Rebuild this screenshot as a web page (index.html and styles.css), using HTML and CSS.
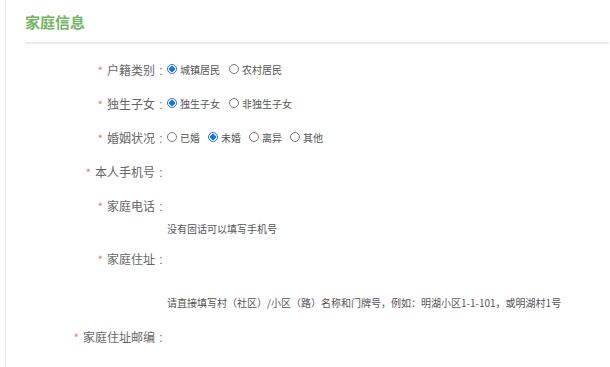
FILE: index.html
```html
<!DOCTYPE html>
<html lang="zh-CN">
<head>
    <meta charset="UTF-8">
    <meta name="viewport" content="width=device-width, initial-scale=1.0">
    <title>家庭信息</title>
    <link rel="stylesheet" href="styles.css">
</head>
<body>
    <div class="page">
        <div class="section-head">
            <h2 class="section-title">家庭信息</h2>
        </div>

        <form class="info-form">
            <div class="form-row">
                <label class="form-label"><span class="req">*</span>户籍类别<span class="colon">:</span></label>
                <div class="radio-group">
                    <label class="radio-item"><input type="radio" name="hukou" checked>城镇居民</label>
                    <label class="radio-item"><input type="radio" name="hukou">农村居民</label>
                </div>
            </div>

            <div class="form-row">
                <label class="form-label"><span class="req">*</span>独生子女<span class="colon">:</span></label>
                <div class="radio-group">
                    <label class="radio-item"><input type="radio" name="only" checked>独生子女</label>
                    <label class="radio-item"><input type="radio" name="only">非独生子女</label>
                </div>
            </div>

            <div class="form-row">
                <label class="form-label"><span class="req">*</span>婚姻状况<span class="colon">:</span></label>
                <div class="radio-group tight">
                    <label class="radio-item"><input type="radio" name="marry">已婚</label>
                    <label class="radio-item"><input type="radio" name="marry" checked>未婚</label>
                    <label class="radio-item"><input type="radio" name="marry">离异</label>
                    <label class="radio-item"><input type="radio" name="marry">其他</label>
                </div>
            </div>

            <div class="form-row">
                <label class="form-label"><span class="req">*</span>本人手机号<span class="colon">:</span></label>
            </div>

            <div class="form-row short">
                <label class="form-label"><span class="req">*</span>家庭电话<span class="colon">:</span></label>
            </div>
            <p class="form-hint">没有固话可以填写手机号</p>

            <div class="form-row tall">
                <label class="form-label"><span class="req">*</span>家庭住址<span class="colon">:</span></label>
            </div>
            <p class="form-hint spaced">请直接填写村（社区）/小区（路）名称和门牌号，例如：明湖小区1-1-101，或明湖村1号</p>

            <div class="form-row short last">
                <label class="form-label"><span class="req">*</span>家庭住址邮编<span class="colon">:</span></label>
            </div>
        </form>
    </div>
</body>
</html>
```

FILE: styles.css
```css
body {
    margin: 0;
    font-family: "Noto Sans CJK SC", "Liberation Sans", sans-serif;
    color: #606266;
    background-color: #fff;
}

.page {
    margin-left: 5px;
    border-left: 1px solid #e8e8e8;
    min-height: 367px;
}

.section-head {
    padding: 11px 1px 0 19px;
}

.section-title {
    margin: 0;
    font-size: 15px;
    line-height: 22px;
    font-weight: bold;
    color: #74b564;
    padding-bottom: 9px;
    border-bottom: 2px solid #ececec;
}

.info-form {
    padding-top: 8px;
}

.form-row {
    display: flex;
    align-items: center;
    height: 34px;
}
.form-row.short {
    height: 28px;
    margin-top: 3px;
}
.form-row.tall {
    height: 38px;
}
.form-row.last {
    margin-top: 9px;
}

.form-label {
    width: 161px;
    flex-shrink: 0;
    text-align: right;
    font-size: 12px;
    color: #666;
    white-space: nowrap;
}

/* 红色星号 */
.req {
    color: #f56c6c;
    margin-right: 4px;
    font-size: 11px;
}

.colon {
    display: inline-block;
    width: 12px;
    text-align: center;
    font-family: "Liberation Sans", sans-serif;
}

.radio-group {
    display: flex;
    align-items: center;
    gap: 9px;
}
.radio-group.tight {
    gap: 8px;
}

.radio-item {
    display: flex;
    align-items: center;
    font-size: 10px;
    color: #555;
}

.radio-item input {
    appearance: none;
    -webkit-appearance: none;
    width: 10px;
    height: 10px;
    margin: 0 3px 0 0;
    border: 1px solid #777;
    border-radius: 50%;
    box-sizing: border-box;
    background-color: #fff;
}
.radio-item input:checked {
    border-color: #1a73e8;
    background: radial-gradient(circle, #1a73e8 0 2.6px, #fff 3px);
}

.form-hint {
    margin: 0 0 0 161px;
    height: 20px;
    line-height: 20px;
    font-size: 10px;
    color: #555;
}
.form-hint.spaced {
    margin-top: 16px;
}
```
